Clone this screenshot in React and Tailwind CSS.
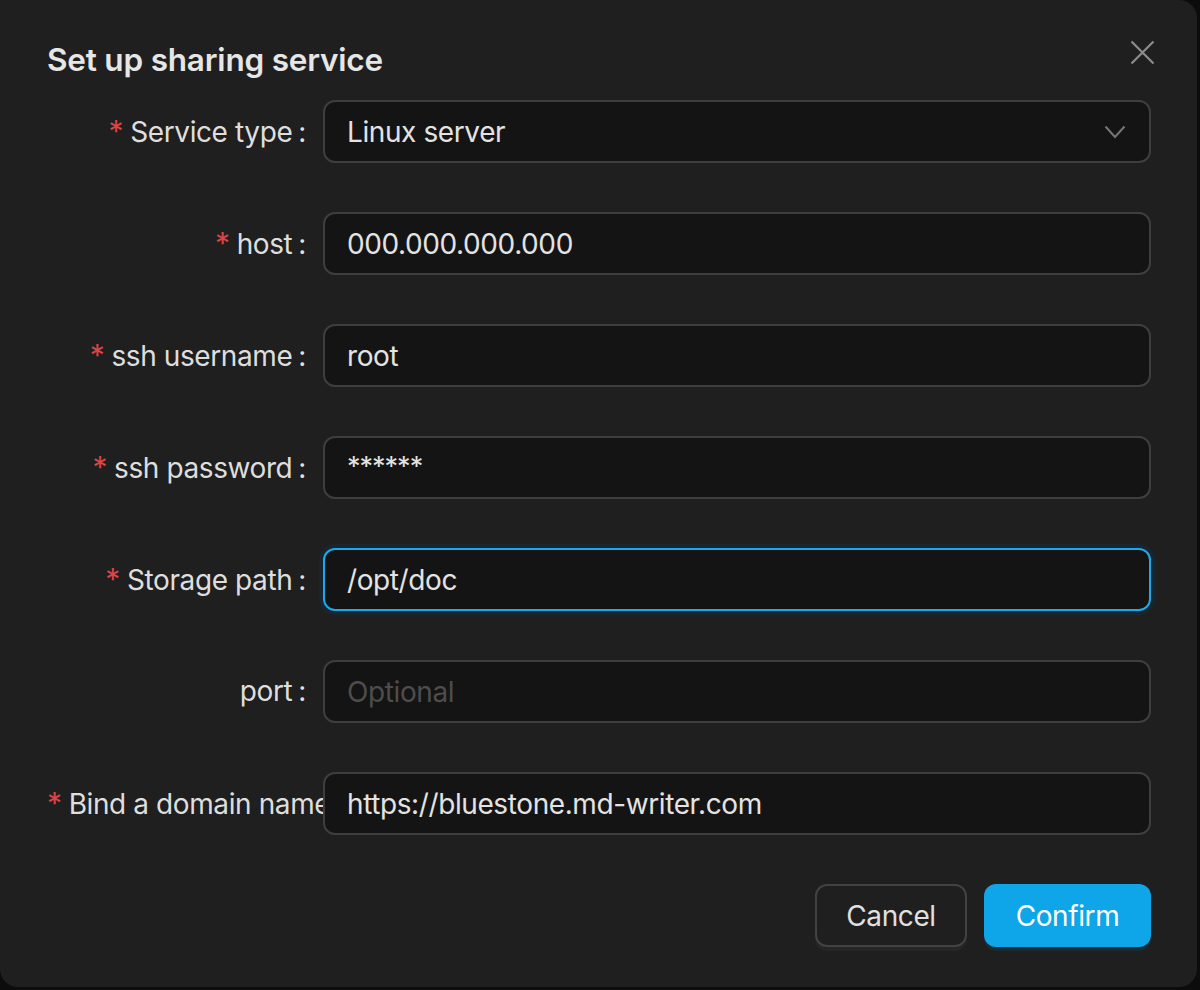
import React from 'react';

const fields = [
  { label: 'Service type', value: 'Linux server', required: true, select: true },
  { label: 'host', value: '000.000.000.000', required: true },
  { label: 'ssh username', value: 'root', required: true },
  { label: 'ssh password', value: '******', required: true },
  { label: 'Storage path', value: '/opt/doc', required: true, focused: true },
  { label: 'port', placeholder: 'Optional' },
  { label: 'Bind a domain name', value: 'https://bluestone.md-writer.com', required: true },
];

const Field = ({ f }) => (
  <div className="flex items-center h-[63px]">
    <div className="w-[276px] shrink-0 overflow-hidden whitespace-nowrap text-right text-[28px] leading-[63px] text-[#dedede] tracking-[-0.4px]">
      {f.required && <span className="text-[#dc4446] mr-[7px] text-[30px]">*</span>}
      <span>{f.label}</span>
      <span className="ml-[6px] mr-[17px]">:</span>
    </div>
    <div
      className={
        'flex-1 h-[63px] rounded-[12px] bg-[#141414] flex items-center pl-[22px] pr-[22px] text-[28px] tracking-[-0.4px] ' +
        (f.focused
          ? 'border-2 border-[#1fa8e6] shadow-[0_0_0_4px_#172630]'
          : 'border-2 border-[#3e3e3e]')
      }
    >
      {f.value ? (
        <span
          className={
            'flex-1 text-[#e3e3e3] ' + (f.value === '******' ? 'tracking-[-1px] text-[27px] -mt-[1px]' : '')
          }
        >
          {f.value}
        </span>
      ) : (
        <span className="flex-1 text-[#4d4d4d]">{f.placeholder}</span>
      )}
      {f.select && (
        <svg width="22" height="14" viewBox="0 0 22 14" className="mr-[1px]">
          <path d="M1.5 1.5 L11 12 L20.5 1.5" fill="none" stroke="#767676" strokeWidth="2" />
        </svg>
      )}
    </div>
  </div>
);

export default function App() {
  return (
    <div className="w-[1200px] h-[990px] bg-[#0c0c0c] overflow-hidden" style={{ fontFamily: 'Inter, "Noto Sans", sans-serif' }}>
      <div className="w-[1197px] h-[987px] bg-[#1f1f1f] rounded-tr-[18px] rounded-b-[18px] relative pl-[47px] pr-[46px] pt-[40px]">
        <button className="absolute right-[42px] top-[40px] w-[25px] h-[25px]">
          <svg width="25" height="25" viewBox="0 0 25 25">
            <path d="M1.5 1.5 L23.5 23.5 M23.5 1.5 L1.5 23.5" stroke="#8c8c8c" strokeWidth="2.2" fill="none" />
          </svg>
        </button>
        <h2 className="text-[31.5px] font-semibold leading-[40px] text-[#e6e6e6] tracking-[-0.2px]">Set up sharing service</h2>
        <div className="mt-[20px] flex flex-col gap-[49px]">
          {fields.map((f) => (
            <Field key={f.label} f={f} />
          ))}
        </div>
        <div className="mt-[49px] flex justify-end gap-[17px]">
          <button className="w-[152px] h-[63px] rounded-[12px] border-2 border-[#424242] bg-[#1f1f1f] text-[28px] tracking-[-0.4px] text-[#e0e0e0] shadow-[0_4px_0_#262626]">
            Cancel
          </button>
          <button className="w-[167px] h-[63px] rounded-[12px] bg-[#0ea5e9] text-[28px] tracking-[-0.4px] text-white shadow-[0_4px_0_#1b2a33]">
            Confirm
          </button>
        </div>
      </div>
    </div>
  );
}
